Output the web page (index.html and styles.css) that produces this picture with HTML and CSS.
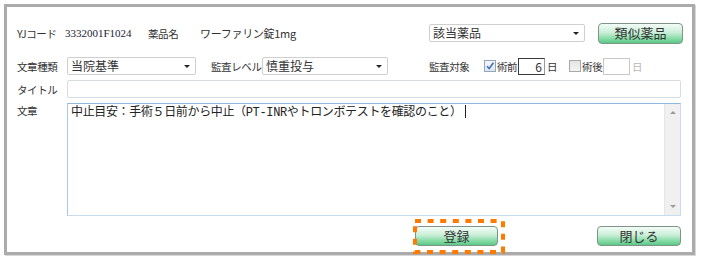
FILE: index.html
```html
<!DOCTYPE html>
<html lang="ja">

<head>
    <meta charset="UTF-8" />
    <meta name="viewport" content="width=device-width, initial-scale=1" />
    <title>文章登録</title>
    <link rel="stylesheet" href="styles.css">
</head>

<body>
    <div class="frame">
        <!-- 薬品情報 -->
        <div class="row row-drug">
            <span class="label label-yj">YJコード</span>
            <span class="code">3332001F1024</span>
            <span class="label label-name">薬品名</span>
            <span class="drug-name">ワーファリン錠1mg</span>
            <div class="dropdown dropdown-target">該当薬品</div>
            <button class="green-btn btn-similar">類似薬品</button>
        </div>

        <!-- 種類・レベル・対象 -->
        <div class="row row-type">
            <span class="label label-col">文章種類</span>
            <div class="dropdown dropdown-type">当院基準</div>
            <span class="label label-level">監査レベル</span>
            <div class="dropdown dropdown-level">慎重投与</div>
            <span class="label label-target">監査対象</span>
            <span class="check checked">
                <svg width="10" height="10" viewBox="0 0 10 10"><path d="M2 5.2 L4.2 7.6 L8.4 1.8" fill="none" stroke="#3b6fc0" stroke-width="1.6" /></svg>
            </span>
            <span class="label check-label">術前</span>
            <span class="day-input day-active">6</span>
            <span class="label day-unit">日</span>
            <span class="check check-after"></span>
            <span class="label check-label">術後</span>
            <span class="day-input"></span>
            <span class="label day-unit disabled">日</span>
        </div>

        <div class="row row-title">
            <span class="label label-col">タイトル</span>
            <div class="text-input"></div>
        </div>

        <div class="row row-body">
            <span class="label label-col">文章</span>
            <div class="text-area">
                <div class="text-area-content">中止目安：手術５日前から中止（PT-INRやトロンボテストを確認のこと）<span class="caret"></span></div>
                <div class="scrollbar">
                    <span class="arrow-up"></span>
                    <span class="arrow-down"></span>
                </div>
            </div>
        </div>

        <div class="row row-actions">
            <span class="highlight">
                <button class="green-btn btn-register">登録</button>
                <svg class="highlight-box" width="92" height="35" viewBox="0 0 92 35">
                    <rect x="2" y="2" width="88" height="31" fill="none" stroke="#ff7a00" stroke-width="4" stroke-dasharray="6 6.6" />
                </svg>
            </span>
            <button class="green-btn btn-close">閉じる</button>
        </div>
    </div>
</body>

</html>
```

FILE: styles.css
```css
body {
    margin: 0;
    padding: 0;
    background-color: #fff;
    font-family: "Noto Sans CJK JP", sans-serif;
    color: #333;
}

.frame {
    box-sizing: border-box;
    width: 691px;
    height: 251px;
    margin: 4px;
    border: 3px solid #ababab;
    box-shadow: 1px 1px 0 #d8d8d8;
    padding: 15px 0 0 10px;
}

.row {
    display: flex;
    align-items: center;
    font-size: 11px;
}

.label {
    font-size: 10.5px;
    letter-spacing: -0.4px;
    white-space: nowrap;
}

.row-drug {
    height: 22px;
}

.label-yj {
    width: 48px;
}

.code {
    width: 83px;
    font-family: "Liberation Serif", serif;
    font-size: 11px;
    color: #223;
}

.label-name {
    width: 52px;
}

.drug-name {
    width: 229px;
    letter-spacing: -0.3px;
}

.dropdown {
    position: relative;
    box-sizing: border-box;
    height: 18px;
    line-height: 16px;
    padding-left: 3px;
    border: 1px solid #cfcfcf;
    border-radius: 2px;
    background: #fff;
    font-size: 12px;
}

.dropdown::after {
    content: "";
    position: absolute;
    right: 5px;
    top: 7px;
    border-left: 3px solid transparent;
    border-right: 3px solid transparent;
    border-top: 3px solid #222;
}

.dropdown-target {
    width: 156px;
}

.green-btn {
    box-sizing: border-box;
    height: 20px;
    padding: 0;
    border: 1px solid #7f9488;
    border-radius: 4px;
    background: linear-gradient(to bottom, #f4fcf7 0%, #c9eed7 45%, #7fd9a1 80%, #5cc888 100%);
    font-family: "Noto Sans CJK JP", sans-serif;
    font-size: 13px;
    line-height: 18px;
    color: #333;
}

.btn-similar {
    width: 85px;
    height: 21px;
    margin-left: 13px;
}

.row-type {
    height: 18px;
    margin-top: 13px;
}

.label-col {
    width: 50px;
}

.dropdown-type {
    width: 129px;
}

.label-level {
    width: 51px;
    margin-left: 15px;
}

.dropdown-level {
    width: 126px;
}

.label-target {
    width: 55px;
    margin-left: 41px;
}

.check {
    box-sizing: border-box;
    display: inline-flex;
    align-items: center;
    justify-content: center;
    width: 12px;
    height: 12px;
    margin-right: 1px;
    border: 1px solid #94a6ba;
    background: linear-gradient(to bottom, #f4f6f9, #dfe5ec);
}

.check-after {
    margin-left: 12px;
    border-color: #a8a8a8;
    background: linear-gradient(to bottom, #e4e4e4, #f4f4f4);
}

.check-label {
    width: 21px;
}

.day-input {
    box-sizing: border-box;
    width: 27px;
    height: 17px;
    padding-right: 2px;
    border: 1px solid #c8c8c8;
    text-align: right;
    font-size: 12px;
    line-height: 15px;
}

.day-active {
    border-color: #3a3a3a #9a9a9a #3a3a3a #3a3a3a;
}

.day-unit {
    margin-left: 2px;
}

.disabled {
    color: #b8b8b8;
}

.row-title {
    height: 18px;
    margin-top: 5px;
}

.text-input {
    box-sizing: border-box;
    width: 614px;
    height: 18px;
    border: 1px solid #d6dce2;
    border-radius: 2px;
}

.row-body {
    align-items: flex-start;
    height: 113px;
    margin-top: 5px;
}

.text-area {
    box-sizing: border-box;
    display: flex;
    width: 614px;
    height: 113px;
    border: 1px solid #c6dcef;
    border-top-color: #8fb8df;
    border-left-color: #a9c8e6;
}

.text-area-content {
    flex: 1;
    padding: 1px 3px;
    font-family: "Liberation Mono", "Noto Sans CJK JP", monospace;
    font-size: 12px;
    letter-spacing: -0.35px;
    line-height: 14px;
    color: #222;
    white-space: nowrap;
}

.caret {
    display: inline-block;
    width: 1px;
    height: 13px;
    margin-left: 3px;
    vertical-align: -2px;
    background: #222;
}

.scrollbar {
    position: relative;
    width: 15px;
    background: #f0f0f0;
    border-left: 1px solid #e6e6e6;
}

.arrow-up,
.arrow-down {
    position: absolute;
    left: 5px;
    border-left: 3px solid transparent;
    border-right: 3px solid transparent;
}

.arrow-up {
    top: 7px;
    border-bottom: 3px solid #9a9a9a;
}

.arrow-down {
    bottom: 7px;
    border-top: 3px solid #9a9a9a;
}

.row-actions {
    justify-content: flex-end;
    height: 20px;
    margin-top: 10px;
    padding-right: 11px;
}

.highlight {
    position: relative;
    display: inline-flex;
}

.highlight-box {
    position: absolute;
    left: -2px;
    top: -7px;
}

.btn-register {
    width: 83px;
}

.btn-close {
    width: 84px;
    margin-left: 99px;
}
```
